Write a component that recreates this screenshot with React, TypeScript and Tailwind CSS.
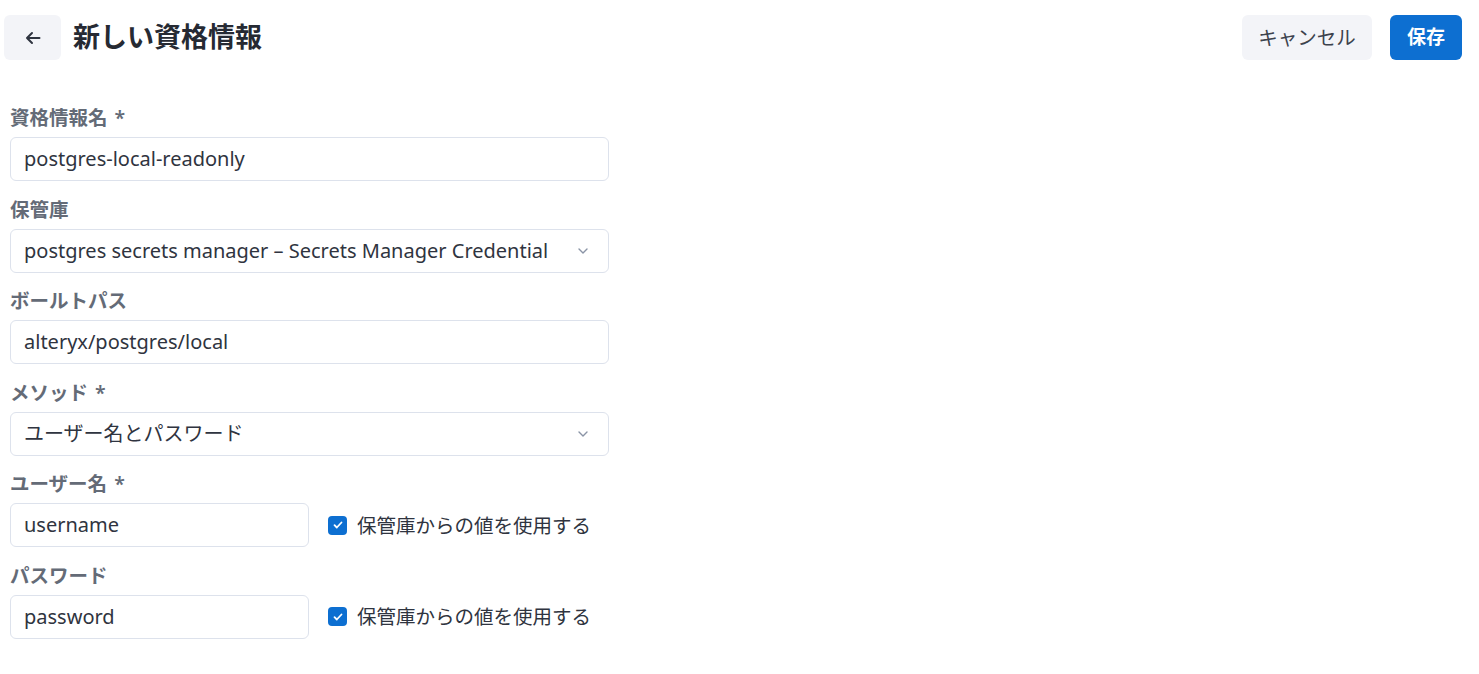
import React from "react";

const font = { fontFamily: '"Noto Sans", "Noto Sans CJK JP", sans-serif' };

function Chevron() {
  return (
    <svg width="14" height="14" viewBox="0 0 14 14" fill="none" className="text-[#8a94a6]">
      <path d="M3 5l4 4 4-4" stroke="currentColor" strokeWidth="1.4" strokeLinecap="round" strokeLinejoin="round" />
    </svg>
  );
}

function Label({ text, required }: { text: string; required?: boolean }) {
  return (
    <div className="text-[19.5px] leading-[24px] font-semibold text-[#646b77] mb-[7px]">
      {text}
      {required && <span className="ml-[7px]">*</span>}
    </div>
  );
}

function Input({ value, w = "w-[599px]", select }: { value: string; w?: string; select?: boolean }) {
  return (
    <div
      className={`${w} h-[44px] rounded-[6px] border border-[#dde2ec] bg-white flex items-center pl-[13px] pr-[18px] text-[20px] text-[#2f3440]`}
    >
      <span className="flex-1 truncate">{value}</span>
      {select && <Chevron />}
    </div>
  );
}

function Check() {
  return (
    <div className="flex items-center gap-[10px] ml-[19px] text-[19.5px] text-[#2f3440]">
      <div className="w-[19px] h-[19px] rounded-[4px] bg-[#0d6fd1] flex items-center justify-center">
        <svg width="12" height="12" viewBox="0 0 12 12" fill="none">
          <path d="M2.5 6.2l2.3 2.3 4.7-5" stroke="white" strokeWidth="1.8" strokeLinecap="round" strokeLinejoin="round" />
        </svg>
      </div>
      <span>保管庫からの値を使用する</span>
    </div>
  );
}

export default function App() {
  return (
    <div className="w-[1479px] h-[674px] bg-white" style={font}>
      <div className="flex items-center justify-between pl-[4px] pr-[17px] pt-[15px]">
        <div className="flex items-center gap-[12px]">
          <button className="w-[57px] h-[45px] rounded-[6px] bg-[#f3f4f8] flex items-center justify-center">
            <svg width="20" height="20" viewBox="0 0 20 20" fill="none">
              <path d="M16.5 10H4M9 5l-5 5 5 5" stroke="#2f3440" strokeWidth="2" strokeLinecap="round" strokeLinejoin="round" />
            </svg>
          </button>
          <h1 className="text-[27px] font-bold text-[#262a33]">新しい資格情報</h1>
        </div>
        <div className="flex items-center gap-[18px]">
          <button className="w-[130px] h-[45px] rounded-[6px] bg-[#f3f4f8] text-[19.5px] text-[#3c424d]">キャンセル</button>
          <button className="w-[72px] h-[45px] rounded-[6px] bg-[#0d6fd1] text-[19px] font-semibold text-white">保存</button>
        </div>
      </div>
      <div className="pl-[10px] pt-[46px] flex flex-col gap-[16.6px]">
        <div>
          <Label text="資格情報名" required />
          <Input value="postgres-local-readonly" />
        </div>
        <div>
          <Label text="保管庫" />
          <Input value="postgres secrets manager – Secrets Manager Credential" select />
        </div>
        <div>
          <Label text="ボールトパス" />
          <Input value="alteryx/postgres/local" />
        </div>
        <div>
          <Label text="メソッド" required />
          <Input value="ユーザー名とパスワード" select />
        </div>
        <div>
          <Label text="ユーザー名" required />
          <div className="flex items-center">
            <Input value="username" w="w-[299px]" />
            <Check />
          </div>
        </div>
        <div>
          <Label text="パスワード" />
          <div className="flex items-center">
            <Input value="password" w="w-[299px]" />
            <Check />
          </div>
        </div>
      </div>
    </div>
  );
}
